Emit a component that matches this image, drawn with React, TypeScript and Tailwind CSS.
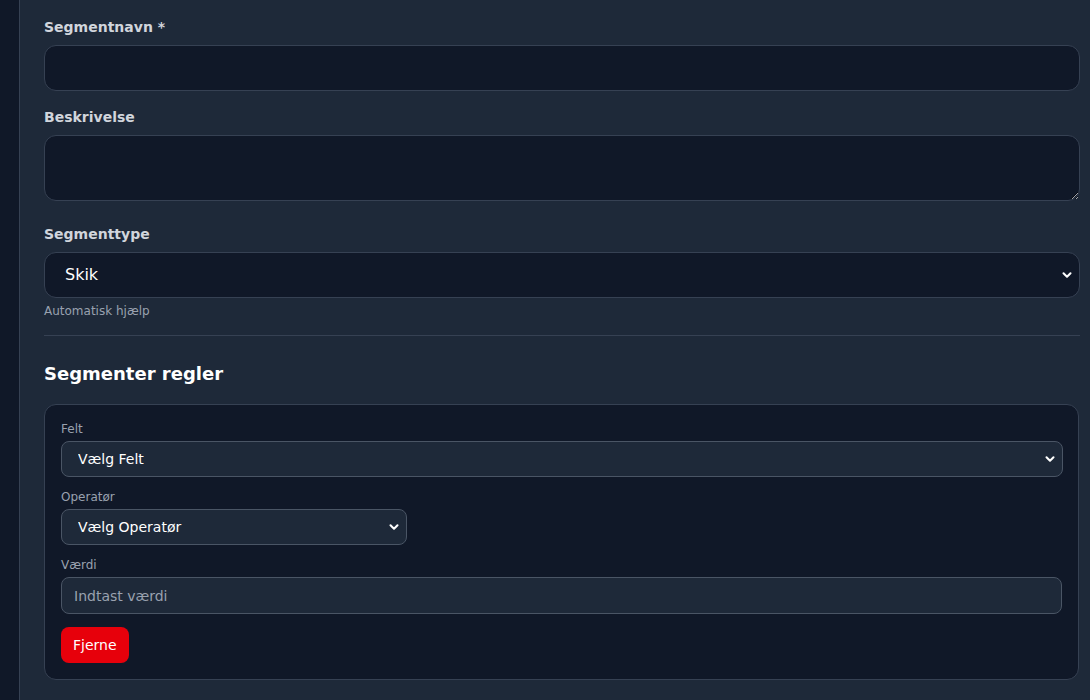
import { ChevronDown } from "lucide-react";

const FONT = { fontFamily: '"DejaVu Sans", "Noto Sans", sans-serif' };

function Chevron() {
  return (
    <ChevronDown
      aria-hidden
      className="pointer-events-none absolute right-[6px] top-1/2 -translate-y-1/2 w-[14px] h-[14px] text-white"
      strokeWidth={3.5}
    />
  );
}

export default function App() {
  return (
    <div className="flex min-h-[700px] bg-gray-900 [color-scheme:dark]" style={FONT}>
      <aside className="w-[19px] shrink-0 bg-gray-900" />
      <main className="flex-1 bg-gray-800 border-l border-gray-700 pl-6 pr-[10px] pt-[17px] pb-6">
        <form className="flex flex-col">
          <label className="text-sm font-bold text-gray-300 leading-5 mb-2">Segmentnavn *</label>
          <input
            type="text"
            className="h-[46px] w-full rounded-xl bg-gray-900 border border-gray-700 px-4 text-base text-white outline-none"
          />

          <label className="text-sm font-bold text-gray-300 leading-5 mt-4 mb-2">Beskrivelse</label>
          <textarea
            rows={2}
            className="block h-[66px] w-full rounded-xl bg-gray-900 border border-gray-700 px-4 py-3 text-base text-white outline-none"
          />

          <label className="text-sm font-bold text-gray-300 leading-5 mt-[23px] mb-2">Segmenttype</label>
          <div className="relative">
            <select className="h-[46px] w-full appearance-none rounded-xl bg-gray-900 border border-gray-700 pl-5 pr-8 text-base text-white outline-none">
              <option>Skik</option>
            </select>
            <Chevron />
          </div>
          <p className="text-xs leading-4 text-gray-400 mt-[5px]">Automatisk hjælp</p>

          <div className="border-t border-gray-700 mt-4" />

          <h2 className="text-lg font-bold text-white leading-7 mt-6 mb-4">Segmenter regler</h2>

          <div className="rounded-xl bg-gray-900 border border-gray-700 p-4 mr-px">
            <div className="flex flex-col">
              <label className="text-xs leading-4 text-gray-400 mb-1">Felt</label>
              <div className="relative mr-[-1px]">
                <select className="h-9 w-full appearance-none rounded-lg bg-gray-800 border border-gray-600 pl-4 pr-8 text-sm text-white outline-none">
                  <option>Vælg Felt</option>
                </select>
                <Chevron />
              </div>

              <label className="text-xs leading-4 text-gray-400 mt-3 mb-1">Operatør</label>
              <div className="relative w-[346px]">
                <select className="h-9 w-full appearance-none rounded-lg bg-gray-800 border border-gray-600 pl-4 pr-8 text-sm text-white outline-none">
                  <option>Vælg Operatør</option>
                </select>
                <Chevron />
              </div>

              <label className="text-xs leading-4 text-gray-400 mt-3 mb-1">Værdi</label>
              <input
                type="text"
                placeholder="Indtast værdi"
                className="h-[37px] w-full rounded-lg bg-gray-800 border border-gray-600 px-3 text-sm text-white placeholder:text-gray-400 outline-none mr-[-1px]"
              />

              <div className="mt-[13px]">
                <button
                  type="button"
                  className="h-9 rounded-lg bg-red-600 px-3 text-sm text-white"
                >
                  Fjerne
                </button>
              </div>
            </div>
          </div>
        </form>
      </main>
    </div>
  );
}
